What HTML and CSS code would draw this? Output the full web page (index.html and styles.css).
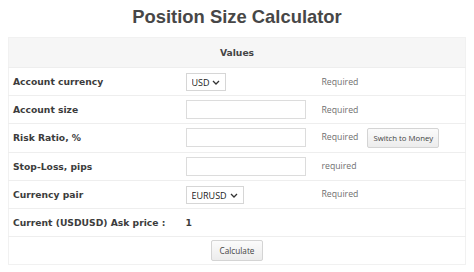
FILE: index.html
```html
<!DOCTYPE html>
<html>
<head>
<meta charset="utf-8">
<link rel="stylesheet" href="styles.css">
</head>
<body>
<h1 class="title">Position Size Calculator</h1>
<table class="calc">
  <colgroup>
    <col class="c-label">
    <col class="c-field">
    <col class="c-note">
  </colgroup>
  <thead>
    <tr><th colspan="3" class="head">Values</th></tr>
  </thead>
  <tbody>
    <tr>
      <td class="label">Account currency</td>
      <td><span class="sel sel-usd"><select class="select"><option>USD</option></select><svg class="chev" width="8" height="5" viewBox="0 0 8 5"><path d="M1 1 L4 4 L7 1" fill="none" stroke="#333" stroke-width="1.3"/></svg></span></td>
      <td class="note">Required</td>
    </tr>
    <tr>
      <td class="label">Account size</td>
      <td><input class="field" type="text"></td>
      <td class="note">Required</td>
    </tr>
    <tr>
      <td class="label">Risk Ratio, %</td>
      <td><input class="field" type="text"></td>
      <td class="note"><span class="note-inline">Required</span><button class="btn btn-switch">Switch to Money</button></td>
    </tr>
    <tr>
      <td class="label">Stop-Loss, pips</td>
      <td><input class="field" type="text"></td>
      <td class="note">required</td>
    </tr>
    <tr>
      <td class="label">Currency pair</td>
      <td><span class="sel sel-pair"><select class="select"><option>EURUSD</option></select><svg class="chev" width="8" height="5" viewBox="0 0 8 5"><path d="M1 1 L4 4 L7 1" fill="none" stroke="#333" stroke-width="1.3"/></svg></span></td>
      <td class="note">Required</td>
    </tr>
    <tr>
      <td class="label">Current (USDUSD) Ask price :</td>
      <td class="label">1</td>
      <td></td>
    </tr>
    <tr>
      <td colspan="3" class="center"><button class="btn btn-calc">Calculate</button></td>
    </tr>
  </tbody>
</table>
</body>
</html>
```

FILE: styles.css
```css
html, body {
  margin: 0;
  padding: 0;
  background: #fff;
}
body {
  padding: 0 8px;
  font-family: "DejaVu Sans", Verdana, sans-serif;
  color: #3a3a3a;
}
.title {
  margin: 6px 0 9px;
  font-family: "Liberation Sans", Arial, sans-serif;
  font-weight: bold;
  font-size: 18.4px;
  line-height: 22px;
  color: #474747;
  text-align: center;
}
.calc {
  width: 458px;
  border-collapse: collapse;
  border: 1px solid #f1f1f1;
  table-layout: fixed;
}
.c-label { width: 177px; }
.c-field { width: 136px; }
.head {
  height: 29px;
  padding: 0;
  background: #f6f6f6;
  font-size: 9.2px;
  font-weight: bold;
  color: #444;
  text-align: center;
}
.calc td {
  height: 27.2px;
  padding: 0;
  border-top: 1px solid #eeeeee;
  vertical-align: middle;
}
.calc td.label {
  padding-left: 4px;
  font-size: 9.2px;
  font-weight: bold;
  color: #3c3c3c;
}
.calc td + td.label {
  padding-left: 0;
}
.note, .note-inline {
  font-family: "Open Sans", "Noto Sans", sans-serif;
  font-size: 8.7px;
  color: #6f6f6f;
}
.note {
  white-space: nowrap;
}
.note-inline {
  margin-right: 9px;
}
.field {
  box-sizing: border-box;
  width: 120px;
  height: 19px;
  margin: 0;
  padding: 0 4px;
  border: 1px solid #dcdcdc;
  border-radius: 0;
  background: #fff;
  display: block;
}
.sel {
  position: relative;
  display: inline-block;
  vertical-align: middle;
}
.select {
  -webkit-appearance: none;
  appearance: none;
  box-sizing: border-box;
  height: 18px;
  margin: 0;
  padding: 0 0 0 5px;
  border: 1px solid #d6d6d6;
  border-radius: 0;
  background: #fff;
  font-family: "Open Sans", "Noto Sans", sans-serif;
  font-size: 9px;
  color: #222;
  display: block;
}
.sel-usd .select { width: 40px; }
.sel-pair .select { width: 58px; }
.chev {
  position: absolute;
  right: 6px;
  top: 7px;
  pointer-events: none;
}
.btn {
  box-sizing: border-box;
  margin: 0;
  padding: 0;
  border: 1px solid #d4d4d4;
  border-radius: 2px;
  background: linear-gradient(#fbfbfb, #ececec);
  font-family: "Open Sans", "Noto Sans", sans-serif;
  color: #444;
  vertical-align: middle;
}
.btn-switch {
  width: 72px;
  height: 20px;
  font-size: 7.8px;
}
.btn-calc {
  width: 52px;
  height: 21px;
  font-size: 8.2px;
}
.center {
  text-align: center;
}
```
